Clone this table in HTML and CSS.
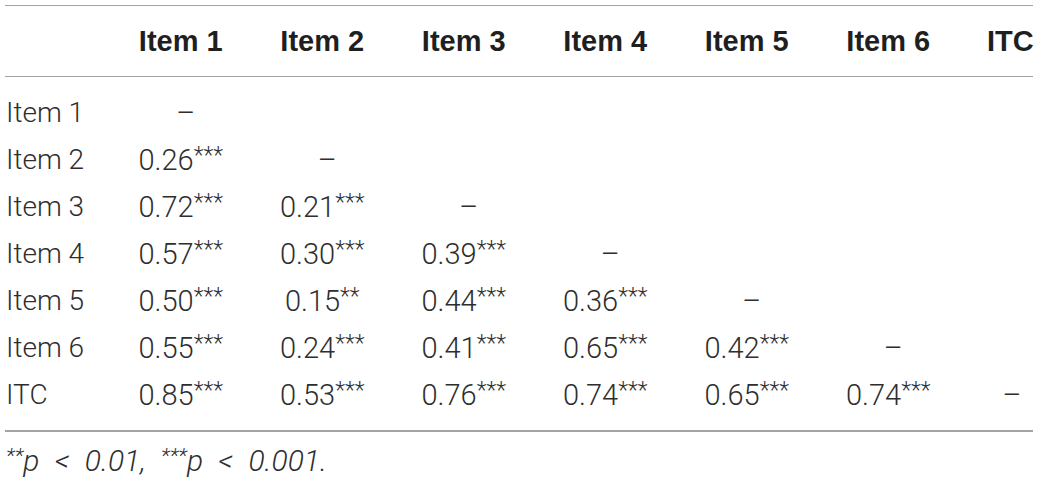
FILE: index.html
```html
<!DOCTYPE html>
<html>
<head>
<meta charset="utf-8">
<link rel="stylesheet" href="styles.css">
</head>
<body>
<div class="wrap">
<table class="corr">
<colgroup><col class="c0"><col class="ci"><col class="ci"><col class="ci"><col class="ci"><col class="ci"><col class="ci"><col class="cl"></colgroup>
<thead>
<tr><th></th><th>Item 1</th><th>Item 2</th><th>Item 3</th><th>Item 4</th><th>Item 5</th><th>Item 6</th><th class="end">ITC</th></tr>
</thead>
<tbody>
<tr class="first"><td class="lab">Item 1</td><td class="dash">–</td><td></td><td></td><td></td><td></td><td></td><td class="end"></td></tr>
<tr><td class="lab">Item 2</td><td>0.26<sup>***</sup></td><td class="dash">–</td><td></td><td></td><td></td><td></td><td class="end"></td></tr>
<tr><td class="lab">Item 3</td><td>0.72<sup>***</sup></td><td>0.21<sup>***</sup></td><td class="dash">–</td><td></td><td></td><td></td><td class="end"></td></tr>
<tr><td class="lab">Item 4</td><td>0.57<sup>***</sup></td><td>0.30<sup>***</sup></td><td>0.39<sup>***</sup></td><td class="dash">–</td><td></td><td></td><td class="end"></td></tr>
<tr><td class="lab">Item 5</td><td>0.50<sup>***</sup></td><td>0.15<sup>**</sup></td><td>0.44<sup>***</sup></td><td>0.36<sup>***</sup></td><td class="dash">–</td><td></td><td class="end"></td></tr>
<tr><td class="lab">Item 6</td><td>0.55<sup>***</sup></td><td>0.24<sup>***</sup></td><td>0.41<sup>***</sup></td><td>0.65<sup>***</sup></td><td>0.42<sup>***</sup></td><td class="dash">–</td><td class="end"></td></tr>
<tr class="last"><td class="lab">ITC</td><td>0.85<sup>***</sup></td><td>0.53<sup>***</sup></td><td>0.76<sup>***</sup></td><td>0.74<sup>***</sup></td><td>0.65<sup>***</sup></td><td>0.74<sup>***</sup></td><td class="end dash">–</td></tr>
</tbody>
</table>
<p class="note"><sup>**</sup>p &lt; 0.01, <sup>***</sup>p &lt; 0.001.</p>
</div>
</body>
</html>
```
FILE: styles.css
```css
html, body {
  margin: 0;
  padding: 0;
  background: #fff;
}
.wrap {
  padding: 5px 6px 0 5px;
  font-family: Roboto, "Liberation Sans", sans-serif;
  font-weight: 300;
  color: #2e2e2e;
}
.corr {
  width: 1028px;
  border-collapse: collapse;
  table-layout: fixed;
}
.c0 { width: 105px; }
.ci { width: 141.5px; }
.cl { width: 74px; }
.corr thead tr {
  border-top: 1.5px solid #a3a3a3;
  border-bottom: 1.5px solid #a3a3a3;
}
.corr th {
  font-family: "Liberation Sans", Arial, sans-serif;
  font-weight: bold;
  font-size: 29px;
  color: #1f1f1f;
  height: 70px;
  padding: 0;
  text-align: center;
  vertical-align: middle;
}
.corr td {
  font-size: 29px;
  height: 47px;
  padding: 0;
  text-align: center;
  vertical-align: middle;
}
.corr td.dash {
  padding-left: 10px;
}
.corr .end {
  padding-left: 28px;
}
.corr td.end.dash {
  padding-left: 32px;
}
.corr td.lab {
  font-size: 28px;
  text-align: left;
  padding-left: 1px;
}
.corr tr.first td {
  padding-top: 12px;
}
.corr tr.last td {
  padding-bottom: 12px;
}
.corr tbody {
  border-bottom: 2.5px solid #a3a3a3;
}
.corr sup {
  font-size: 23px;
  vertical-align: 7px;
  line-height: 0;
}
.note {
  margin: 13px 0 0 1px;
  font-size: 30px;
  font-style: italic;
  line-height: 32px;
  word-spacing: 8px;
}
.note sup {
  font-size: 21px;
  vertical-align: 8px;
  line-height: 0;
}
```
